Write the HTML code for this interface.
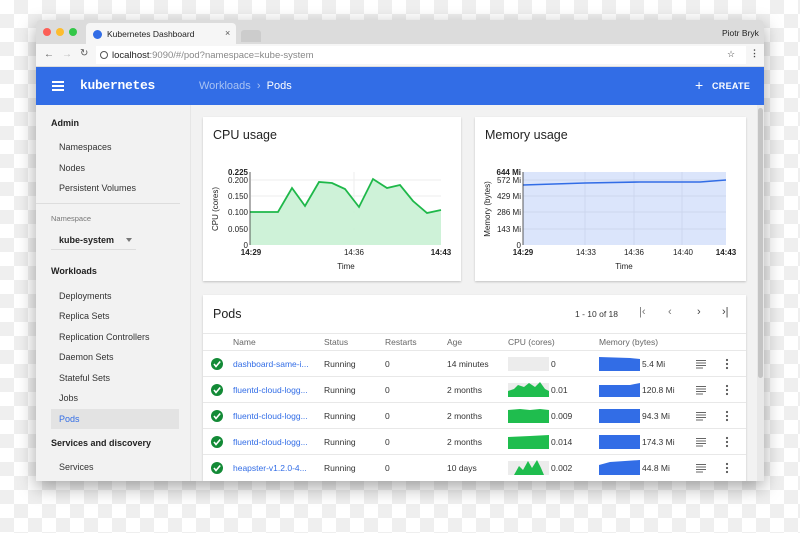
<!DOCTYPE html>
<html><head><meta charset="utf-8"><style>
*{box-sizing:border-box;margin:0;padding:0}
body{width:800px;height:533px;overflow:hidden;font-family:"Liberation Sans",sans-serif;position:relative;
background-color:#fff;background-image:linear-gradient(45deg,#efefef 25%,transparent 25%,transparent 75%,#efefef 75%),linear-gradient(45deg,#efefef 25%,transparent 25%,transparent 75%,#efefef 75%);background-size:28px 28px;background-position:0 0,14px 14px}
.a{position:absolute}
#win{left:36px;top:20px;width:728px;height:461px;background:#f2f2f2;box-shadow:0 6px 18px rgba(0,0,0,.35);overflow:hidden;border-radius:4px 4px 0 0}
.t{font-size:9px;color:#222}
.card{background:#fff;box-shadow:0 1px 2px rgba(0,0,0,.2)}
.nav{font-size:9px;color:#333}
.hd{font-size:9px;color:#222;font-weight:bold}
.col{font-size:8.5px;color:#666}
.cell{font-size:8.5px;color:#333}
.row{position:absolute;left:0;width:543px;height:26px;border-top:1px solid #e8e8e8}
</style></head><body>
<div id="win" class="a">
 <div class="a" style="left:0;top:0;width:728px;height:24px;background:#dcdcdc"></div>
 <div class="a" style="left:7px;top:8px;width:8px;height:8px;border-radius:50%;background:#fc5f57"></div>
 <div class="a" style="left:20px;top:8px;width:8px;height:8px;border-radius:50%;background:#fdbc2e"></div>
 <div class="a" style="left:33px;top:8px;width:8px;height:8px;border-radius:50%;background:#33c748"></div>
 <div class="a" style="left:50px;top:3px;width:150px;height:21px;background:#f6f6f6;border-radius:4px 4px 0 0"></div>
 <div class="a" style="left:57px;top:10px;width:9px;height:9px;border-radius:50%;background:#326de6"></div>
 <div class="a t" style="left:71px;top:9px;font-size:8.5px">Kubernetes Dashboard</div>
 <div class="a t" style="left:189px;top:8px;color:#555">×</div>
 <div class="a" style="left:205px;top:10px;width:20px;height:12px;background:#ccc;border-radius:3px 3px 0 0"></div>
 <div class="a t" style="left:686px;top:8px;font-size:8.5px">Piotr Bryk</div>
 <div class="a" style="left:0;top:24px;width:728px;height:23px;background:#f6f6f6;border-bottom:1px solid #ddd"></div>
 <div class="a t" style="left:8px;top:29px;color:#555;font-size:10px">←</div>
 <div class="a t" style="left:26px;top:29px;color:#bbb;font-size:10px">→</div>
 <div class="a t" style="left:44px;top:28px;color:#555;font-size:10px">↻</div>
 <div class="a" style="left:60px;top:26px;width:650px;height:18px;background:#fff"></div>
 <div class="a" style="left:64px;top:31px;width:8px;height:8px;border:1px solid #555;border-radius:50%"></div>
 <div class="a t" style="left:76px;top:30px;font-size:9.5px;color:#888"><b style="color:#222;font-weight:normal">localhost</b>:9090/#/pod?namespace=kube-system</div>
 <div class="a t" style="left:691px;top:29px;color:#444">☆</div>
 <div class="a t" style="left:714px;top:28px;color:#444;font-weight:bold">⋮</div>
 <div class="a" style="left:0;top:47px;width:728px;height:38px;background:#326de6"></div>
 <div class="a" style="left:16px;top:61px;width:12px;height:2px;background:#fff;box-shadow:0 4px 0 #fff,0 8px 0 #fff"></div>
 <div class="a" style="left:44px;top:58px;font-size:13px;color:#fff;font-weight:bold;font-family:'Liberation Mono',monospace;letter-spacing:-.3px">kubernetes</div>
 <div class="a" style="left:163px;top:60px;font-size:11px;color:#a9c3f3">Workloads&nbsp;&nbsp;›&nbsp;&nbsp;<span style="color:#fff">Pods</span></div>
 <div class="a" style="left:659px;top:57px;font-size:14px;color:#fff">+</div>
 <div class="a" style="left:676px;top:61px;font-size:9px;color:#fff;font-weight:bold;letter-spacing:.3px">CREATE</div>
 <div class="a hd" style="left:15px;top:98px">Admin</div>
 <div class="a nav" style="left:23px;top:122px">Namespaces</div>
 <div class="a nav" style="left:23px;top:143px">Nodes</div>
 <div class="a nav" style="left:23px;top:163px">Persistent Volumes</div>
 <div class="a" style="left:0;top:183px;width:144px;height:1px;background:#ddd"></div>
 <div class="a" style="left:15px;top:194px;font-size:7.5px;color:#777">Namespace</div>
 <div class="a hd" style="left:23px;top:215px;font-size:9px">kube-system</div>
 <div class="a" style="left:90px;top:218px;border:3px solid transparent;border-top:4px solid #777"></div>
 <div class="a" style="left:15px;top:229px;width:85px;height:1px;background:#ddd"></div>
 <div class="a hd" style="left:15px;top:246px">Workloads</div>
 <div class="a nav" style="left:23px;top:271px">Deployments</div>
 <div class="a nav" style="left:23px;top:291px">Replica Sets</div>
 <div class="a nav" style="left:23px;top:312px">Replication Controllers</div>
 <div class="a nav" style="left:23px;top:332px">Daemon Sets</div>
 <div class="a nav" style="left:23px;top:353px">Stateful Sets</div>
 <div class="a nav" style="left:23px;top:373px">Jobs</div>
 <div class="a" style="left:15px;top:389px;width:128px;height:20px;background:#e3e3e3"></div>
 <div class="a nav" style="left:23px;top:394px;color:#326de6">Pods</div>
 <div class="a hd" style="left:15px;top:418px">Services and discovery</div>
 <div class="a nav" style="left:23px;top:442px">Services</div>
 <div class="a" style="left:154px;top:85px;width:1px;height:376px;background:#e6e6e6"></div>
 <div class="a" style="left:721px;top:85px;width:7px;height:376px;background:#e8e8e8"></div>
 <div class="a" style="left:722px;top:88px;width:5px;height:270px;background:#c4c4c4;border-radius:3px"></div>
 <div class="a card" style="left:167px;top:97px;width:258px;height:164px"></div>
 <div class="a" style="left:177px;top:108px;font-size:12.5px;color:#222">CPU usage</div>
 <div class="a card" style="left:439px;top:97px;width:271px;height:164px"></div>
 <div class="a" style="left:449px;top:108px;font-size:12.5px;color:#222">Memory usage</div>
 <div class="a card" style="left:167px;top:275px;width:543px;height:190px">
  <div class="a" style="left:10px;top:12px;font-size:12.5px;color:#222">Pods</div>
  <div class="a cell" style="left:372px;top:14px">1 - 10 of 18</div>
  <div class="a cell" style="left:436px;top:11px;font-size:11px;color:#777">|‹</div>
  <div class="a cell" style="left:465px;top:11px;font-size:11px;color:#777">‹</div>
  <div class="a cell" style="left:494px;top:11px;font-size:11px;color:#444">›</div>
  <div class="a cell" style="left:519px;top:11px;font-size:11px;color:#444">›|</div>
  <div class="a" style="left:0;top:38px;width:543px;height:1px;background:#e8e8e8"></div>
  <div class="a col" style="left:30px;top:42px">Name</div>
  <div class="a col" style="left:121px;top:42px">Status</div>
  <div class="a col" style="left:182px;top:42px">Restarts</div>
  <div class="a col" style="left:244px;top:42px">Age</div>
  <div class="a col" style="left:305px;top:42px">CPU (cores)</div>
  <div class="a col" style="left:396px;top:42px">Memory (bytes)</div>
 </div>
</div>
<svg class="a" style="left:0;top:0" width="800" height="533" font-family="Liberation Sans, sans-serif">
 <g stroke="#eee" stroke-width="1">
  <line x1="251" y1="196" x2="441" y2="196"/><line x1="251" y1="229" x2="441" y2="229"/><line x1="251" y1="180" x2="441" y2="180"/><line x1="251" y1="212" x2="441" y2="212"/>
  <line x1="354" y1="172" x2="354" y2="245"/>
 </g>
 <polygon fill="#c9f1d4" opacity=".9" points="250,212 278,212 292,188 305,206 319,182 332,183 345,189 359,207 373,179 387,188 400,185 413,201 427,213 441,210 441,245 250,245"/>
 <polyline fill="none" stroke="#1fb84a" stroke-width="1.8" points="250,212 278,212 292,188 305,206 319,182 332,183 345,189 359,207 373,179 387,188 400,185 413,201 427,213 441,210"/>
 <line x1="250" y1="172" x2="250" y2="245" stroke="#333" stroke-width=".8"/>
 <g font-size="8" fill="#222" text-anchor="end">
  <text x="248" y="175" font-weight="bold">0.225</text><text x="248" y="183">0.200</text><text x="248" y="199">0.150</text><text x="248" y="215">0.100</text><text x="248" y="232">0.050</text><text x="248" y="248">0</text>
 </g>
 <g font-size="8" fill="#222" text-anchor="middle">
  <text x="251" y="255" font-weight="bold">14:29</text><text x="354" y="255">14:36</text><text x="441" y="255" font-weight="bold">14:43</text><text x="346" y="269">Time</text>
 </g>
 <text transform="translate(218,209) rotate(-90)" font-size="8" fill="#222" text-anchor="middle">CPU (cores)</text>
 <rect x="523" y="172" width="203" height="73" fill="#dbe5fb"/>
 <g stroke="#c9d3ea" stroke-width=".7">
  <line x1="523" y1="196" x2="726" y2="196"/><line x1="523" y1="212" x2="726" y2="212"/><line x1="523" y1="229" x2="726" y2="229"/><line x1="523" y1="180" x2="726" y2="180"/>
  <line x1="585" y1="172" x2="585" y2="245"/><line x1="634" y1="172" x2="634" y2="245"/><line x1="682" y1="172" x2="682" y2="245"/>
 </g>
 <polyline fill="none" stroke="#326de6" stroke-width="1.6" points="523,185 585,183 640,182 700,182 726,180"/>
 <line x1="523" y1="172" x2="523" y2="245" stroke="#333" stroke-width=".8"/>
 <g font-size="8" fill="#222" text-anchor="end">
  <text x="521" y="175" font-weight="bold">644 Mi</text><text x="521" y="183">572 Mi</text><text x="521" y="199">429 Mi</text><text x="521" y="215">286 Mi</text><text x="521" y="232">143 Mi</text><text x="521" y="248">0</text>
 </g>
 <g font-size="8" fill="#222" text-anchor="middle">
  <text x="523" y="255" font-weight="bold">14:29</text><text x="586" y="255">14:33</text><text x="634" y="255">14:36</text><text x="683" y="255">14:40</text><text x="726" y="255" font-weight="bold">14:43</text><text x="624" y="269">Time</text>
 </g>
 <text transform="translate(490,209) rotate(-90)" font-size="8" fill="#222" text-anchor="middle">Memory (bytes)</text>
</svg>
<div class="a" style="left:203px;top:350px;width:543px;height:131px;overflow:hidden">
 <div class="row" style="top:0"></div><div class="row" style="top:26px"></div><div class="row" style="top:52px"></div><div class="row" style="top:78px"></div><div class="row" style="top:104px"></div>
</div>
<svg class="a" style="left:0;top:0" width="800" height="533" font-family="Liberation Sans, sans-serif" font-size="8.5">
 <defs><g id="ck"><circle r="6" fill="#138a36"/><polyline points="-3,0 -1,2.5 3.2,-2.5" fill="none" stroke="#fff" stroke-width="1.6"/></g>
 <g id="ic"><rect x="0" y="-4" width="10" height="1" fill="#666"/><rect x="0" y="-1.5" width="10" height="1" fill="#666"/><rect x="0" y="1" width="10" height="1" fill="#666"/><rect x="0" y="3.5" width="7" height="1" fill="#666"/>
 <circle cx="31" cy="-4" r="1.1" fill="#555"/><circle cx="31" cy="0" r="1.1" fill="#555"/><circle cx="31" cy="4" r="1.1" fill="#555"/></g></defs>
 <g fill="#333">
  <use href="#ck" x="217" y="364"/><text x="233" y="367" fill="#326de6">dashboard-same-i...</text><text x="324" y="367">Running</text><text x="385" y="367">0</text><text x="447" y="367">14 minutes</text>
  <rect x="508" y="357" width="41" height="14" fill="#ececec"/><text x="551" y="367">0</text>
  <polygon points="599,357 630,358 640,359 640,371 599,371" fill="#326de6"/><text x="642" y="367">5.4 Mi</text><use href="#ic" x="696" y="364"/>

  <use href="#ck" x="217" y="390"/><text x="233" y="393" fill="#326de6">fluentd-cloud-logg...</text><text x="324" y="393">Running</text><text x="385" y="393">0</text><text x="447" y="393">2 months</text>
  <rect x="508" y="383" width="41" height="14" fill="#ececec"/><polygon points="508,397 508,391 514,389 518,385 524,387 529,383 535,387 540,382 545,389 549,391 549,397" fill="#1fbd4e"/><text x="551" y="393">0.01</text>
  <polygon points="599,385 630,385 640,383 640,397 599,397" fill="#326de6"/><text x="642" y="393">120.8 Mi</text><use href="#ic" x="696" y="390"/>

  <use href="#ck" x="217" y="416"/><text x="233" y="419" fill="#326de6">fluentd-cloud-logg...</text><text x="324" y="419">Running</text><text x="385" y="419">0</text><text x="447" y="419">2 months</text>
  <polygon points="508,423 508,410 520,409 530,410 540,409 549,410 549,423" fill="#1fbd4e"/><text x="551" y="419">0.009</text>
  <rect x="599" y="409" width="41" height="14" fill="#326de6"/><text x="642" y="419">94.3 Mi</text><use href="#ic" x="696" y="416"/>

  <use href="#ck" x="217" y="442"/><text x="233" y="445" fill="#326de6">fluentd-cloud-logg...</text><text x="324" y="445">Running</text><text x="385" y="445">0</text><text x="447" y="445">2 months</text>
  <polygon points="508,449 508,437 530,436 549,435 549,449" fill="#1fbd4e"/><text x="551" y="445">0.014</text>
  <rect x="599" y="435" width="41" height="14" fill="#326de6"/><text x="642" y="445">174.3 Mi</text><use href="#ic" x="696" y="442"/>

  <use href="#ck" x="217" y="468"/><text x="233" y="471" fill="#326de6">heapster-v1.2.0-4...</text><text x="324" y="471">Running</text><text x="385" y="471">0</text><text x="447" y="471">10 days</text>
  <rect x="508" y="461" width="41" height="14" fill="#ececec"/><polygon points="514,475 519,466 523,470 528,461 532,468 537,460 541,468 544,475" fill="#1fbd4e"/><text x="551" y="471">0.002</text>
  <polygon points="599,465 610,462 625,461 640,460 640,475 599,475" fill="#326de6"/><text x="642" y="471">44.8 Mi</text><use href="#ic" x="696" y="468"/>
 </g>
</svg>
</body></html>
